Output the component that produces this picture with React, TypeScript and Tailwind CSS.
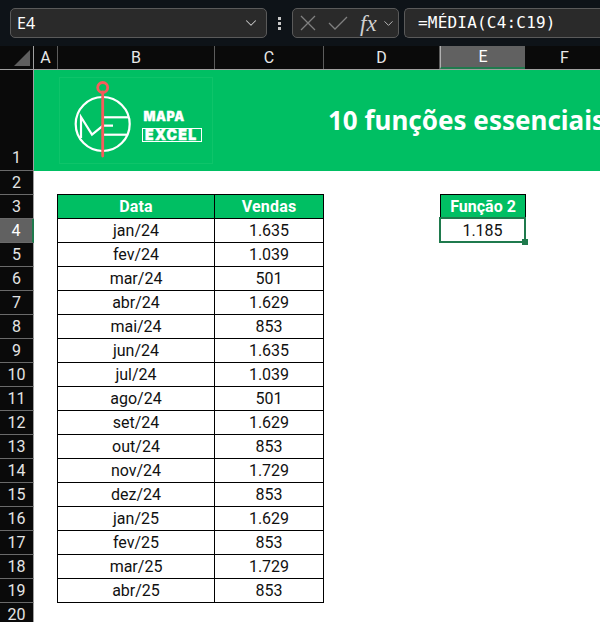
import type React from "react";
import { ChevronDown } from "lucide-react";

const rows: [string, string][] = [
  ["jan/24", "1.635"],
  ["fev/24", "1.039"],
  ["mar/24", "501"],
  ["abr/24", "1.629"],
  ["mai/24", "853"],
  ["jun/24", "1.635"],
  ["jul/24", "1.039"],
  ["ago/24", "501"],
  ["set/24", "1.629"],
  ["out/24", "853"],
  ["nov/24", "1.729"],
  ["dez/24", "853"],
  ["jan/25", "1.629"],
  ["fev/25", "853"],
  ["mar/25", "1.729"],
  ["abr/25", "853"],
];

const columns = [
  { name: "A", width: "w-[24px]" },
  { name: "B", width: "w-[157px]" },
  { name: "C", width: "w-[109px]" },
  { name: "D", width: "w-[116px]" },
  { name: "E", width: "w-[85px]", active: true },
  { name: "F", width: "w-[80px]" },
];

const Logo = () => (
  <svg width="154" height="87" viewBox="0 0 154 87" className="shrink-0">
    <rect x="0.5" y="0.5" width="153" height="86" fill="none" stroke="#0ec46a" />
    <g fill="none" stroke="#fff" strokeWidth="2.2">
      <circle cx="43.7" cy="47" r="27" />
      <path d="M22 61 V40 L33 57.5 L44 48.7 H54" />
      <path d="M44 40.3 H70" />
      <path d="M44 57.7 H69" />
    </g>
    <path d="M43.7 15 V79" stroke="#f75b5b" strokeWidth="2.8" strokeLinecap="round" />
    <circle cx="43.7" cy="10.5" r="5" fill="none" stroke="#f75b5b" strokeWidth="2.8" />
    <text x="84.5" y="44" fill="#fff" stroke="#fff" strokeWidth="0.3" className="font-['Inter',sans-serif] font-black text-[12.5px] tracking-[0.6px]">
      MAPA
    </text>
    <rect x="83.5" y="51.5" width="59" height="13" fill="none" stroke="#fff" strokeWidth="1" />
    <text x="86" y="63" fill="#fff" stroke="#fff" strokeWidth="0.4" className="font-['Inter',sans-serif] font-black text-[14px] tracking-[1.4px]">
      EXCEL
    </text>
  </svg>
);

const Cell = ({ children, className = "" }: { children?: React.ReactNode; className?: string }) => (
  <div className={`flex items-center justify-center h-full pt-[1px] leading-none ${className}`}>{children}</div>
);

export default function App() {
  return (
    <div className="w-[600px] h-[622px] overflow-hidden bg-white font-['Roboto',sans-serif]">
      {/* Formula bar */}
      <div className="h-[46px] bg-[#0e1318] flex items-start pt-[8px] pl-[10px] overflow-hidden">
        <div className="w-[257px] h-[30px] shrink-0 rounded-[5px] border border-[#5a5a5a] bg-[#2a2a2a] flex items-center justify-between pl-[6px] pr-[6px]">
          <span className="text-white text-[16px] font-['Noto_Sans',sans-serif]">E4</span>
          <ChevronDown size={18} strokeWidth={1.4} className="text-[#c8c8c8]" />
        </div>
        <div className="w-[25px] h-[30px] shrink-0 flex flex-col items-center justify-center gap-[2px]">
          <span className="w-[3px] h-[3px] bg-[#c8c8c8]" />
          <span className="w-[3px] h-[3px] bg-[#c8c8c8]" />
          <span className="w-[3px] h-[3px] bg-[#c8c8c8]" />
        </div>
        <div className="w-[107px] h-[30px] shrink-0 rounded-[5px] border border-[#5a5a5a] bg-[#2a2a2a] flex items-center pl-[7px]">
          <svg width="16" height="16" viewBox="0 0 16 16" className="shrink-0">
            <path d="M1 1 L15 15 M15 1 L1 15" stroke="#808080" strokeWidth="1.3" fill="none" />
          </svg>
          <svg width="20" height="14" viewBox="0 0 20 14" className="shrink-0 ml-[12px]">
            <path d="M1 7 L7 13 L19 1" stroke="#808080" strokeWidth="1.3" fill="none" />
          </svg>
          <span className="ml-[12px] font-['Liberation_Serif',serif] italic text-[23px] leading-none text-[#d0d0d0]">fx</span>
          <ChevronDown size={15} strokeWidth={1.4} className="text-[#c8c8c8] ml-[4px] shrink-0" />
        </div>
        <div className="w-[200px] h-[30px] ml-[5px] shrink-0 rounded-l-[5px] border border-r-0 border-[#5a5a5a] bg-[#2a2a2a] flex items-center pl-[13px]">
          <span className="text-white text-[16px] tracking-[0.2px] whitespace-nowrap font-['DejaVu_Sans_Mono',monospace]">=MÉDIA(C4:C19)</span>
        </div>
      </div>

      {/* Column headers */}
      <div className="flex h-[24px] bg-[#0a0a0a] border-b border-[#a0a0a0]">
        <div className="w-[34px] shrink-0 border-r border-[#a0a0a0] flex items-end justify-end pr-[3px] pb-[3px]">
          <div className="w-0 h-0 border-l-[16px] border-l-transparent border-b-[16px] border-b-[#5f5f5f]" />
        </div>
        {columns.map((c) => (
          <div
            key={c.name}
            className={`${c.width} shrink-0 flex items-center justify-center text-[16px] ${
              c.active
                ? "bg-[#616161] text-white border-l border-[#b0b0b0] border-b-2 border-b-[#1f7a4d]"
                : "text-[#e8e8e8] border-r border-[#5c5c5c]"
            }`}
          >
            {c.name}
          </div>
        ))}
      </div>

      <div className="flex">
        {/* Row headers */}
        <div className="w-[34px] shrink-0 bg-[#0a0a0a] text-[16px] text-[#e4e4e4]">
          {Array.from({ length: 20 }, (_, i) => i + 1).map((n) => (
            <div
              key={n}
              className={`flex justify-center border-b border-[#6a6a6a] ${
                n === 1 ? "h-[101px] items-end" : "h-[24px] items-center"
              } ${n === 4 ? "bg-[#616161] text-white border-r-2 border-r-[#1f7a4d]" : "border-r border-r-[#a0a0a0]"}`}
            >
              {n}
            </div>
          ))}
        </div>

        {/* Sheet */}
        <div className="flex-1 min-w-0 overflow-hidden">
          <div className="h-[101px] bg-[#00bf63] flex items-center">
            <div className="ml-[25px]">
              <Logo />
            </div>
            <span className="ml-[115px] text-white font-bold text-[26px] whitespace-nowrap font-['Noto_Sans',sans-serif]">
              10 funções essenciais
            </span>
          </div>

          <div className="h-[23px]" />

          {/* Table + Função 2 */}
          <div className="flex items-start">
            <div className="ml-[23px] w-[267px] shrink-0 border-l border-t border-black text-[16px] text-[#111]">
              <div className="grid grid-cols-[157px_109px] h-[24px] bg-[#00bf63] text-white font-bold tracking-[0.2px] border-b border-black">
                <Cell className="border-r border-black">Data</Cell>
                <Cell className="border-r border-black">Vendas</Cell>
              </div>
              {rows.map(([date, value], i) => (
                <div key={`${date}-${i}`} className="grid grid-cols-[157px_109px] h-[24px] border-b border-black">
                  <Cell className="border-r border-black">{date}</Cell>
                  <Cell className="border-r border-black">{value}</Cell>
                </div>
              ))}
            </div>

            <div className="ml-[116px] w-[86px] shrink-0 text-[16px]">
              <div className="h-[23px] bg-[#00bf63] text-white font-bold border border-b-0 border-black flex items-center justify-center whitespace-nowrap pt-[2px] leading-none">
                Função 2
              </div>
              <div className="relative h-[26px] -ml-px w-[87px] border-2 border-[#1f7a4d] flex items-center justify-center text-[#111] pt-[2px] leading-none">
                1.185
                <span className="absolute -right-[4px] -bottom-[4px] w-[6px] h-[6px] bg-[#1f7a4d]" />
              </div>
            </div>
          </div>
        </div>
      </div>
    </div>
  );
}
